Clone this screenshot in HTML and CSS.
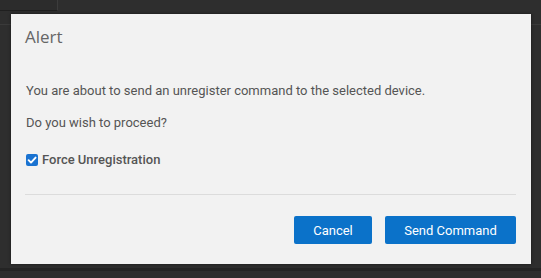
FILE: index.html
```html
<!DOCTYPE html>
<html>
<head>
<meta charset="utf-8">
<link rel="stylesheet" href="styles.css">
</head>
<body>
<div class="page">
  <div class="bg-tab"></div>
  <div class="bg-rule"></div>
  <div class="bg-bottom"></div>
</div>
<div class="modal" role="dialog">
  <h1 class="modal-title">Alert</h1>
  <div class="modal-body">
    <p class="msg">You are about to send an unregister command to the selected device.</p>
    <p class="msg">Do you wish to proceed?</p>
    <label class="check">
      <span class="box"><svg viewBox="0 0 12 12" width="12" height="12"><path d="M2.6 6.2 L5 8.6 L9.6 3.6" fill="none" stroke="#fff" stroke-width="1.9" stroke-linecap="round" stroke-linejoin="round"/></svg></span>
      <span class="check-label">Force Unregistration</span>
    </label>
  </div>
  <div class="modal-footer">
    <button class="btn btn-cancel">Cancel</button>
    <button class="btn btn-send">Send Command</button>
  </div>
</div>
</body>
</html>
```
FILE: styles.css
```css
html, body {
  margin: 0;
  padding: 0;
  width: 541px;
  height: 278px;
  overflow: hidden;
  background: #2e2e2e;
}
.page {
  position: relative;
  width: 541px;
  height: 278px;
}
.bg-tab {
  position: absolute;
  left: 0;
  top: 0;
  width: 57px;
  height: 10px;
  border-right: 1px solid #3c3c3c;
  border-bottom: 1px solid #1f1f1f;
  background: #2c2c2c;
}
.bg-rule {
  position: absolute;
  left: 0;
  top: 24px;
  width: 541px;
  height: 1px;
  background: #3a3a3a;
}
.bg-bottom {
  position: absolute;
  left: 0;
  top: 268px;
  width: 541px;
  height: 3px;
  background: #242424;
}
.modal {
  position: absolute;
  left: 11px;
  top: 14px;
  width: 520px;
  height: 250px;
  box-sizing: border-box;
  background: #f2f2f2;
  box-shadow: 0 0 3px rgba(0,0,0,0.5);
  padding: 0 15px 0 14px;
  font-family: Roboto, "Liberation Sans", sans-serif;
}
.modal-title {
  margin: 0;
  padding-top: 12px;
  height: 48px;
  box-sizing: border-box;
  font-family: "Open Sans", "Liberation Sans", sans-serif;
  font-weight: 400;
  font-size: 17px;
  line-height: 22px;
  color: #666;
}
.modal-body {
  padding-top: 21px;
  height: 133px;
  box-sizing: border-box;
  border-bottom: 1px solid #dcdcdc;
}
.msg {
  margin: 0 0 16px 1px;
  font-size: 13px;
  line-height: 16px;
  color: #555;
}
.check {
  display: flex;
  align-items: center;
  gap: 4px;
  margin-left: 1px;
  margin-top: 21px;
}
.box {
  width: 12px;
  height: 12px;
  border-radius: 2px;
  background: #1a73d1;
  display: flex;
}
.check-label {
  font-size: 13px;
  font-weight: 500;
  color: #555;
  line-height: 16px;
}
.modal-footer {
  display: flex;
  justify-content: flex-end;
  gap: 13px;
  padding-top: 21px;
}
.btn {
  height: 28px;
  border: none;
  border-radius: 2px;
  background: #0b72c9;
  color: #fff;
  font-family: Roboto, "Liberation Sans", sans-serif;
  font-size: 13px;
  padding: 0;
}
.btn-cancel { width: 78px; }
.btn-send { width: 131px; }
```
